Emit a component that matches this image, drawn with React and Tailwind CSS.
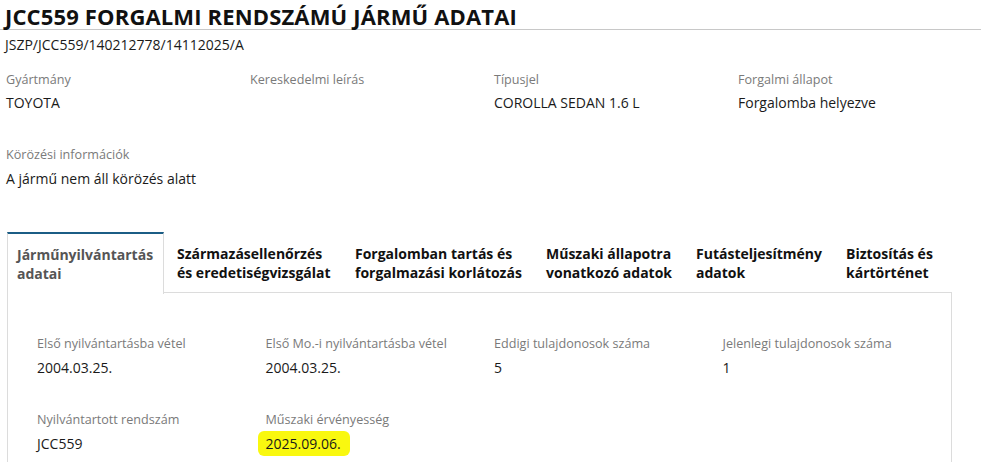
const top = [
  { label: 'Gyártmány', value: 'TOYOTA' },
  { label: 'Kereskedelmi leírás', value: '' },
  { label: 'Típusjel', value: 'COROLLA SEDAN 1.6 L' },
  { label: 'Forgalmi állapot', value: 'Forgalomba helyezve' },
];

const tabs = [
  { a: 'Járműnyilvántartás', b: 'adatai', w: 'w-[178px]' },
  { a: 'Származásellenőrzés', b: 'és eredetiségvizsgálat', w: 'w-[178px]' },
  { a: 'Forgalomban tartás és', b: 'forgalmazási korlátozás', w: 'w-[191px]' },
  { a: 'Műszaki állapotra', b: 'vonatkozó adatok', w: 'w-[150px]' },
  { a: 'Futásteljesítmény', b: 'adatok', w: 'w-[150px]' },
  { a: 'Biztosítás és', b: 'kártörténet', w: 'flex-1' },
];

const Field = ({ label, value, mark, first }) => (
  <div>
    <div className="text-[12.6px] leading-[20px] text-[#7a7a7a]">{label}</div>
    <div className={`${first ? 'mt-[3px]' : 'mt-[4px]'} text-[14px] leading-[20px] text-[#1a1a1a] h-[20px]`}>
      {mark ? (
        <span className="-ml-[8px] pl-[8px] pr-[9px] py-[3px] rounded-[6px] bg-[#f9f80f]">{value}</span>
      ) : (
        value
      )}
    </div>
  </div>
);

export default function App() {
  return (
    <div className="w-[981px] h-[462px] overflow-hidden bg-white font-['Open_Sans',sans-serif] text-[#1a1a1a]">
      <h1 className="pt-[3px] pl-[5px] h-[30px] border-b border-[#c8c8c8] text-[22px] leading-[26px] font-bold tracking-[0.15px] text-[#111]">
        JCC559 FORGALMI RENDSZÁMÚ JÁRMŰ ADATAI
      </h1>
      <div className="mt-[5px] pl-[5px] text-[14px] leading-[20px]">JSZP/JCC559/140212778/14112025/A</div>

      <div className="px-[6px]">
        <div className="mt-[15px] grid grid-cols-4 w-[976px]">
          {top.map((f) => (
            <Field key={f.label} label={f.label} value={f.value} first />
          ))}
        </div>

        <div className="mt-[32px]">
          <Field label="Körözési információk" value="A jármű nem áll körözés alatt" />
        </div>

        {/* tabs */}
        <div className="mt-[43px] ml-[1px] w-[945px]">
          <div className="flex border-b border-[#dcdcdc] h-[61px]">
            <div className="-mb-px w-[157px] h-[62px] bg-white border-x border-[#dcdcdc] border-t-2 border-t-[#1b5d85] pl-[9px] flex items-center">
              <div className="text-[14px] leading-[19px] font-bold text-[#555]">
                {tabs[0].a}
                <br />
                {tabs[0].b}
              </div>
            </div>
            <div className="ml-[13px] flex flex-1">
              {tabs.slice(1).map((t) => (
                <div key={t.a} className={`${t.w} flex items-center pt-[2px]`}>
                  <div className="text-[14px] leading-[19px] font-bold text-[#111] whitespace-nowrap">
                    {t.a}
                    <br />
                    {t.b}
                  </div>
                </div>
              ))}
            </div>
          </div>

          <div className="border-x border-b border-[#dcdcdc] pl-[29px] pt-[41px] pb-[20px]">
            <div className="grid grid-cols-4 w-[914px]">
              <Field label="Első nyilvántartásba vétel" value="2004.03.25." />
              <Field label="Első Mo.-i nyilvántartásba vétel" value="2004.03.25." />
              <Field label="Eddigi tulajdonosok száma" value="5" />
              <Field label="Jelenlegi tulajdonosok száma" value="1" />
            </div>
            <div className="mt-[32px] grid grid-cols-4 w-[914px]">
              <Field label="Nyilvántartott rendszám" value="JCC559" />
              <Field label="Műszaki érvényesség" value="2025.09.06." mark />
            </div>
          </div>
        </div>
      </div>
    </div>
  );
}
